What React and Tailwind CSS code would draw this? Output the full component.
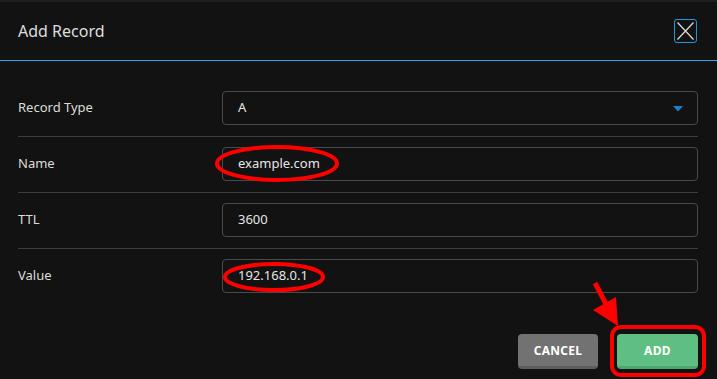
import React from "react";

const font = { fontFamily: '"Noto Sans", "Open Sans", sans-serif' };

function Row({ label, children, last }) {
  return (
    <div className={`flex items-center ${last ? "" : "border-b border-[#3d3d3d]"} pt-[10px] pb-[11px] first:pt-0`}>
      <div className="w-[204px] shrink-0 text-[13px] text-[#dcdcdc]">{label}</div>
      {children}
    </div>
  );
}

function Field({ value, select }) {
  return (
    <div className="relative flex h-[34px] flex-1 items-center rounded-[4px] border border-[#4a4a4a] pl-[15px] text-[13px] text-[#e6e6e6]">
      {value}
      {select && (
        <svg className="absolute right-[14px] top-[14px]" width="10" height="6" viewBox="0 0 10 6">
          <path d="M0 0 H10 L5 5.5 Z" fill="#1b7fc6" />
        </svg>
      )}
    </div>
  );
}

export default function App() {
  return (
    <div className="relative h-[379px] w-[717px] overflow-hidden bg-[#121212]" style={font}>
      <div className="h-[2px] bg-[#1c1e21]" />
      <div className="flex h-[59px] items-center justify-between border-b border-[#2fa3e8] pl-[18px] pr-[20px]">
        <div className="text-[16px] text-[#dedede]">Add Record</div>
        <div className="flex h-[24px] w-[23px] items-center justify-center rounded-[3px] border border-[#2196e0]">
          <svg width="19" height="20" viewBox="0 0 19 20">
            <path d="M1.5 1.5 L17.5 18.5 M17.5 1.5 L1.5 18.5" stroke="#d8d8d8" strokeWidth="1.3" fill="none" />
          </svg>
        </div>
      </div>
      <div className="flex flex-col pl-[18px] pr-[19px] pt-[30px]">
        <Row label="Record Type">
          <Field value="A" select />
        </Row>
        <Row label="Name">
          <Field value="example.com" />
        </Row>
        <Row label="TTL">
          <Field value="3600" />
        </Row>
        <Row label="Value" last>
          <Field value="192.168.0.1" />
        </Row>
        <div className="mt-[30px] flex justify-end gap-[19px]">
          <button className="h-[35px] w-[80px] rounded-[4px] border-b-[3px] border-[#5e5e5e] bg-[#727272] pt-[2px] text-[12px] font-bold tracking-[0.3px] text-white">
            CANCEL
          </button>
          <button className="h-[35px] w-[81px] rounded-[4px] border-b-[3px] border-[#4ea76e] bg-[#5fbf82] pt-[2px] text-[12px] font-bold tracking-[0.3px] text-white">
            ADD
          </button>
        </div>
      </div>
      <svg className="pointer-events-none absolute left-0 top-0" width="717" height="379" viewBox="0 0 717 379">
        <ellipse cx="277" cy="163.5" rx="60" ry="16.5" fill="none" stroke="#ff0000" strokeWidth="4" />
        <ellipse cx="274" cy="277" rx="49" ry="13" fill="none" stroke="#ff0000" strokeWidth="4" />
        <rect x="612" y="327" width="92" height="48" rx="9" fill="none" stroke="#ff0000" strokeWidth="4" />
        <path d="M595 283 L607 306" stroke="#ff0000" strokeWidth="5" fill="none" />
        <path d="M593 310 L616 297 L618 326 Z" fill="#ff0000" />
      </svg>
    </div>
  );
}
